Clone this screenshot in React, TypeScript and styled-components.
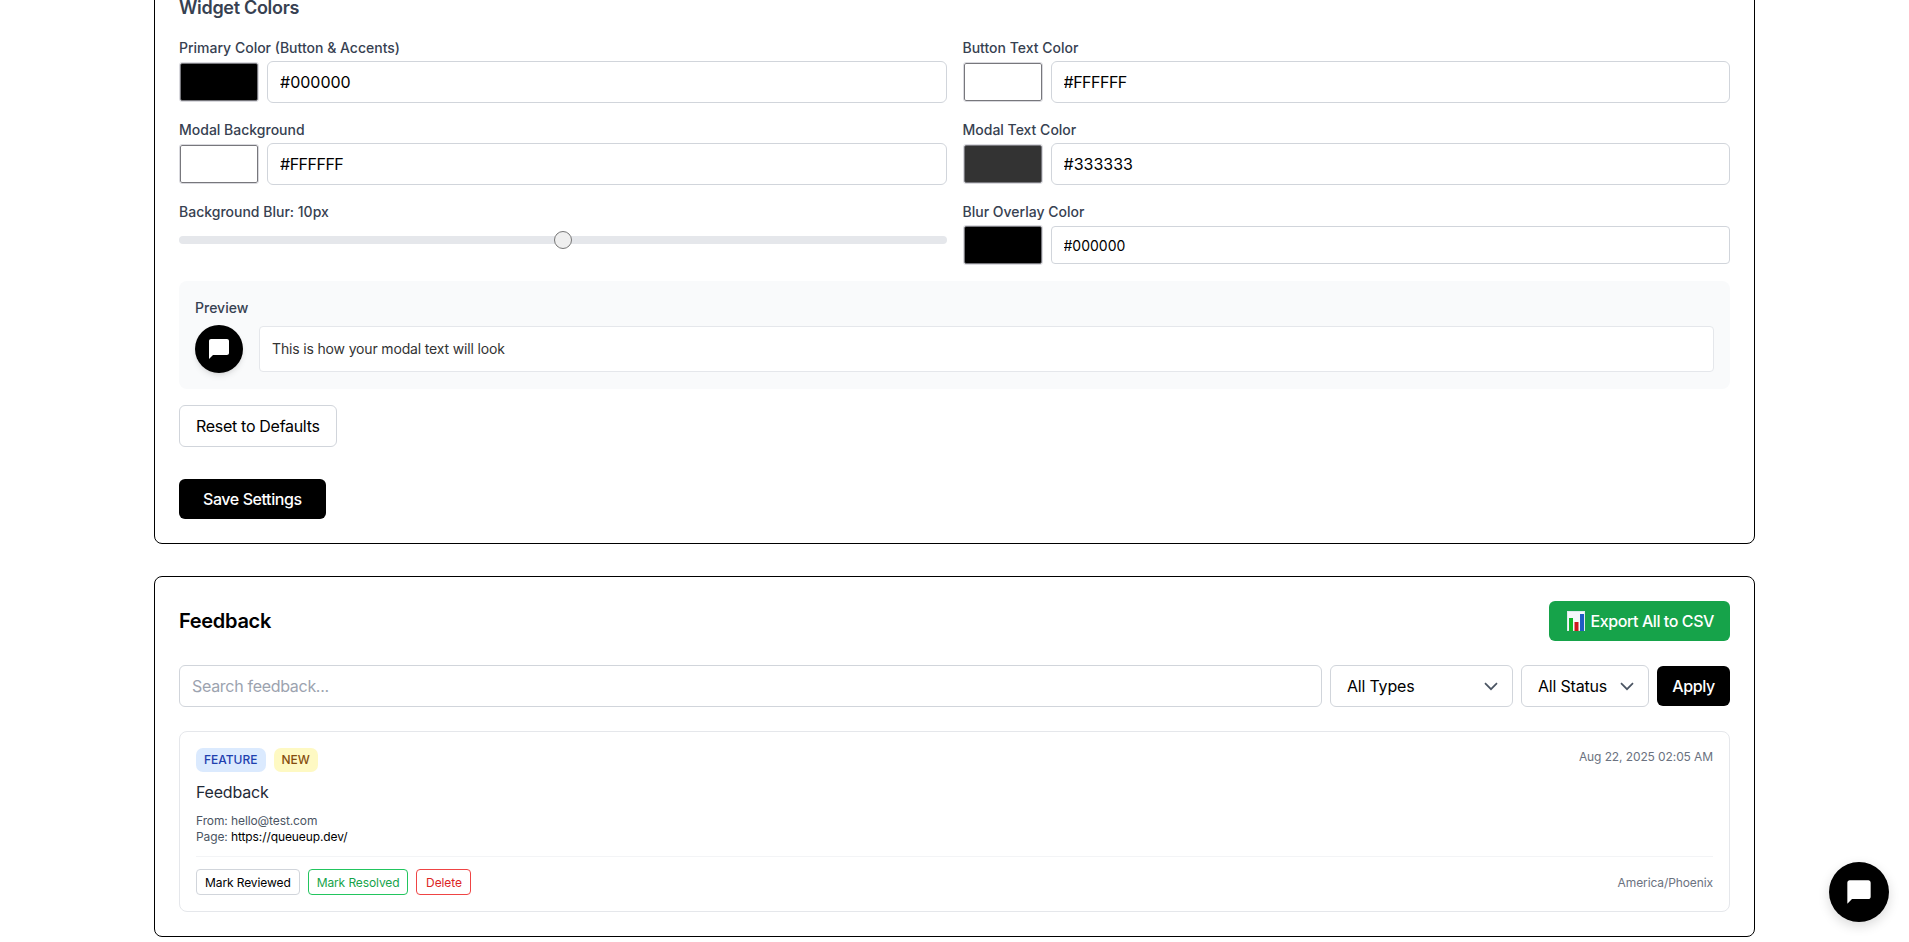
import React from 'react';
import styled, { createGlobalStyle } from 'styled-components';

const GlobalStyle = createGlobalStyle`
  html, body {
    margin: 0;
    padding: 0;
    height: 100%;
    overflow: hidden;
    background: #ffffff;
    font-family: Inter, "Noto Sans", sans-serif;
  }
  * { box-sizing: border-box; }
`;

const Page = styled.div`
  width: 1601px;
  margin: -31.7px auto 0;
  display: flex;
  flex-direction: column;
  gap: 32px;
`;

const Card = styled.section`
  border: 1px solid #000000;
  border-radius: 8px;
  padding: 24px;
  background: #ffffff;
`;

const SectionTitle = styled.h3`
  margin: 0 0 15px;
  padding-top: 1px;
  font-size: 18px;
  line-height: 28px;
  font-weight: 600;
  letter-spacing: -0.3px;
  color: #374151;
`;

const FieldGrid = styled.div`
  display: grid;
  grid-template-columns: 1fr 1fr;
  column-gap: 16px;
  row-gap: 16px;
`;

const Field = styled.div`
  min-width: 0;
`;

const Label = styled.label<{ $gap?: number }>`
  display: block;
  padding-top: 1px;
  margin-bottom: ${(p) => (p.$gap ?? 4) - 1}px;
  font-size: 14px;
  line-height: 20px;
  font-weight: 500;
  color: #374151;
`;

const ColorRow = styled.div`
  display: flex;
  align-items: center;
  gap: 8px;
`;

const Swatch = styled.input`
  flex: none;
  width: 80px;
  height: 40px;
  padding: 0;
  background: #ffffff;
  border: 1px solid #d9d9de;
  border-radius: 3px;
  &::-webkit-color-swatch-wrapper { padding: 0; }
  &::-webkit-color-swatch { border: 1px solid #77777c; border-radius: 2px; }
`;

const TextInput = styled.input<{ $small?: boolean; $tight?: boolean }>`
  flex: 1;
  min-width: 0;
  height: ${(p) => (p.$small ? '38px' : '42px')};
  padding: 0 12px;
  font-family: inherit;
  font-size: ${(p) => (p.$small ? '14px' : '16px')};
  letter-spacing: ${(p) => (p.$tight ? '-0.5px' : '0')};
  color: #000000;
  background: #ffffff;
  border: 1px solid #d1d5db;
  border-radius: ${(p) => (p.$small ? '4px' : '6px')};
  outline: none;
  &::placeholder {
    color: #9ca3af;
    letter-spacing: -0.3px;
  }
`;

const Slider = styled.input`
  display: block;
  appearance: none;
  width: 100%;
  height: 8px;
  margin: 14px 0 0;
  background: #e5e7eb;
  border-radius: 8px;
  outline: none;
  &::-webkit-slider-thumb {
    appearance: none;
    width: 18px;
    height: 18px;
    border-radius: 50%;
    background: #efefef;
    border: 1px solid #767676;
  }
`;

const PreviewPanel = styled.div`
  margin-top: 16px;
  padding: 16px;
  background: #f9fafb;
  border-radius: 8px;
`;

const PreviewRow = styled.div`
  display: flex;
  align-items: center;
  gap: 16px;
`;

const PreviewBubble = styled.div`
  flex: none;
  width: 48px;
  height: 48px;
  border-radius: 50%;
  background: #000000;
  display: flex;
  align-items: center;
  justify-content: center;
  box-shadow: 0 4px 6px -1px rgba(0, 0, 0, 0.1), 0 2px 4px -2px rgba(0, 0, 0, 0.1);
`;

const PreviewText = styled.div`
  flex: 1;
  padding: 12px;
  font-size: 14px;
  line-height: 20px;
  letter-spacing: -0.16px;
  color: #333333;
  background: #ffffff;
  border: 1px solid #e5e7eb;
  border-radius: 4px;
`;

const Button = styled.button<{ $variant?: 'outline' | 'solid' | 'green' }>`
  display: inline-flex;
  align-items: center;
  justify-content: center;
  font-family: inherit;
  font-size: 16px;
  line-height: 24px;
  font-weight: ${(p) => (p.$variant === 'outline' ? 400 : 500)};
  letter-spacing: ${(p) => (p.$variant === 'outline' ? '-0.3px' : '-0.42px')};
  border-radius: 6px;
  cursor: pointer;
  ${(p) =>
    p.$variant === 'outline'
      ? 'height: 42px; padding: 0 16px; color: #000; background: #fff; border: 1px solid #d1d5db;'
      : p.$variant === 'green'
        ? 'height: 40px; padding: 0 16px; color: #fff; background: #16a34a; border: 0;'
        : 'height: 40px; padding: 0 24px; color: #fff; background: #000; border: 0;'}
`;

const ApplyButton = styled(Button)`
  flex: none;
  width: 73px;
  padding: 0;
`;

const Actions = styled.div`
  display: flex;
  flex-direction: column;
  align-items: flex-start;
  gap: 32px;
  margin-top: 16px;
`;

const HeaderRow = styled.div`
  display: flex;
  align-items: center;
  justify-content: space-between;
  margin-bottom: 24px;
`;

const CardTitle = styled.h2`
  margin: 0;
  font-size: 20px;
  line-height: 28px;
  font-weight: 600;
  letter-spacing: -0.3px;
  color: #000000;
`;

const ExportIcon = styled.svg`
  margin: 0 6px 0 2px;
`;

const FilterRow = styled.div`
  display: flex;
  align-items: center;
  gap: 8px;
  margin-bottom: 24px;
`;

const Select = styled.select<{ $width: number }>`
  flex: none;
  appearance: none;
  width: ${(p) => p.$width}px;
  height: 42px;
  padding: 0 16px;
  font-family: inherit;
  font-size: 16px;
  letter-spacing: -0.2px;
  color: #000000;
  background: #ffffff url("data:image/svg+xml,%3Csvg xmlns='http://www.w3.org/2000/svg' width='14' height='9' fill='none' viewBox='0 0 14 9'%3E%3Cpath stroke='%234b5563' stroke-width='1.7' d='m1 1.2 6 6 6-6'/%3E%3C/svg%3E") no-repeat right 14px center / 14px 9px;
  border: 1px solid #d1d5db;
  border-radius: 6px;
  outline: none;
`;

const FeedbackItem = styled.article`
  padding: 16px;
  border: 1px solid #e5e7eb;
  border-radius: 8px;
`;

const ItemTop = styled.div`
  display: flex;
  align-items: flex-start;
  justify-content: space-between;
`;

const Badges = styled.div`
  display: flex;
  gap: 8px;
`;

const Badge = styled.span<{ $bg: string; $fg: string }>`
  padding: 4px 8px;
  font-size: 12px;
  line-height: 16px;
  font-weight: 500;
  border-radius: 7px;
  background: ${(p) => p.$bg};
  color: ${(p) => p.$fg};
`;

const Muted = styled.span`
  padding-top: 1px;
  font-size: 12px;
  line-height: 16px;
  letter-spacing: -0.1px;
  color: #6b7280;
`;

const ItemTitle = styled.div`
  margin-top: 8px;
  font-size: 16px;
  line-height: 24px;
  letter-spacing: -0.2px;
  color: #1f2937;
`;

const Meta = styled.div`
  margin-top: 9px;
  font-size: 12px;
  line-height: 16px;
  letter-spacing: -0.1px;
  color: #4b5563;
`;

const MetaLink = styled.span`
  color: #000000;
`;

const ItemFooter = styled.div`
  display: flex;
  align-items: center;
  justify-content: space-between;
  margin-top: 11px;
  padding-top: 12px;
  border-top: 1px solid #f3f4f6;
`;

const SmallButtons = styled.div`
  display: flex;
  gap: 8px;
`;

const SmallButton = styled.button<{ $tone: string; $border: string }>`
  height: 26px;
  min-width: 55px;
  padding: 0 8px;
  font-family: inherit;
  font-size: 12px;
  letter-spacing: -0.1px;
  color: ${(p) => p.$tone};
  background: #ffffff;
  border: 1px solid ${(p) => p.$border};
  border-radius: 4px;
`;

const Fab = styled.button`
  position: fixed;
  right: 20px;
  bottom: 20px;
  width: 60px;
  height: 60px;
  display: flex;
  align-items: center;
  justify-content: center;
  padding: 0;
  border: 0;
  border-radius: 50%;
  background: #000000;
  box-shadow: 0 4px 12px rgba(0, 0, 0, 0.15);
`;

const ChatIcon = ({ size }: { size: number }) => (
  <svg width={size} height={size} viewBox="0 0 24 24" fill="#ffffff">
    <path d="M20 2H4c-1.1 0-2 .9-2 2v18l4-4h14c1.1 0 2-.9 2-2V4c0-1.1-.9-2-2-2z" />
  </svg>
);

const ChartEmoji = () => (
  <ExportIcon width="18" height="20" viewBox="0 0 18 20">
    <rect x="0" y="0" width="18" height="20" fill="#dfe8ee" />
    <rect x="1" y="1" width="16" height="18" fill="#f5f8fa" />
    <rect x="2" y="7" width="4" height="13" fill="#10b52a" />
    <rect x="7.5" y="11" width="4" height="9" fill="#cc1a1f" />
    <rect x="13" y="3" width="4" height="17" fill="#1f5cc4" />
  </ExportIcon>
);

const ColorField = ({ label, value }: { label: string; value: string }) => (
  <Field>
    <Label>{label}</Label>
    <ColorRow>
      <Swatch type="color" defaultValue={value.toLowerCase()} />
      <TextInput type="text" defaultValue={value} $tight={value === '#FFFFFF'} />
    </ColorRow>
  </Field>
);

export default function App(): React.ReactElement {
  return (
    <>
      <GlobalStyle />
      <Page>
        <Card>
          <SectionTitle>Widget Colors</SectionTitle>
          <FieldGrid>
            <ColorField label="Primary Color (Button & Accents)" value="#000000" />
            <ColorField label="Button Text Color" value="#FFFFFF" />
            <ColorField label="Modal Background" value="#FFFFFF" />
            <ColorField label="Modal Text Color" value="#333333" />
            <Field>
              <Label>Background Blur: 10px</Label>
              <Slider type="range" min={0} max={20} defaultValue={10} />
            </Field>
            <Field>
              <Label>Blur Overlay Color</Label>
              <ColorRow>
                <Swatch type="color" defaultValue="#000000" />
                <TextInput $small type="text" defaultValue="#000000" />
              </ColorRow>
            </Field>
          </FieldGrid>
          <PreviewPanel>
            <Label $gap={8}>Preview</Label>
            <PreviewRow>
              <PreviewBubble>
                <ChatIcon size={24} />
              </PreviewBubble>
              <PreviewText>This is how your modal text will look</PreviewText>
            </PreviewRow>
          </PreviewPanel>
          <Actions>
            <Button $variant="outline">Reset to Defaults</Button>
            <Button $variant="solid">Save Settings</Button>
          </Actions>
        </Card>

        <Card>
          <HeaderRow>
            <CardTitle>Feedback</CardTitle>
            <Button $variant="green">
              <ChartEmoji />
              Export All to CSV
            </Button>
          </HeaderRow>
          <FilterRow>
            <TextInput type="text" placeholder="Search feedback..." />
            <Select $width={183} defaultValue="all">
              <option value="all">All Types</option>
            </Select>
            <Select $width={128} defaultValue="all">
              <option value="all">All Status</option>
            </Select>
            <ApplyButton $variant="solid">Apply</ApplyButton>
          </FilterRow>
          <FeedbackItem>
            <ItemTop>
              <Badges>
                <Badge $bg="#dbeafe" $fg="#1e40af">FEATURE</Badge>
                <Badge $bg="#fef9c3" $fg="#854d0e">NEW</Badge>
              </Badges>
              <Muted>Aug 22, 2025 02:05 AM</Muted>
            </ItemTop>
            <ItemTitle>Feedback</ItemTitle>
            <Meta>
              From: hello@test.com
              <br />
              Page: <MetaLink>https://queueup.dev/</MetaLink>
            </Meta>
            <ItemFooter>
              <SmallButtons>
                <SmallButton $tone="#000000" $border="#d1d5db">Mark Reviewed</SmallButton>
                <SmallButton $tone="#16a34a" $border="#22c55e">Mark Resolved</SmallButton>
                <SmallButton $tone="#dc2626" $border="#ef4444">Delete</SmallButton>
              </SmallButtons>
              <Muted>America/Phoenix</Muted>
            </ItemFooter>
          </FeedbackItem>
        </Card>
      </Page>
      <Fab aria-label="Open chat">
        <ChatIcon size={28} />
      </Fab>
    </>
  );
}
